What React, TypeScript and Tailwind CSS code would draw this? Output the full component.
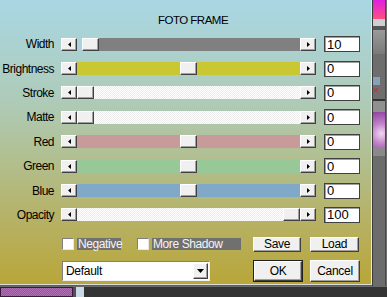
import React from "react";

const font = { fontFamily: '"Liberation Sans", Arial, sans-serif' };

type Row = { label: string; value: string; track: string; thumb: number; leftClear?: boolean };

// thumb: left offset inside the track area (px)
const rows: Row[] = [
  { label: "Width", value: "10", track: "bg-[#808080]", thumb: 5, leftClear: true },
  { label: "Brightness", value: "0", track: "bg-[#c9c832]", thumb: 103 },
  { label: "Stroke", value: "0", track: "dither", thumb: 0 },
  { label: "Matte", value: "0", track: "dither", thumb: 0 },
  { label: "Red", value: "0", track: "bg-[#c99a9a]", thumb: 103 },
  { label: "Green", value: "0", track: "bg-[#98c898]", thumb: 103 },
  { label: "Blue", value: "0", track: "bg-[#7fa8c9]", thumb: 103 },
  { label: "Opacity", value: "100", track: "dither", thumb: 206 },
];

const raised =
  "bg-[#f0f0f0] border border-t-[#ffffff] border-l-[#ffffff] border-r-[#404040] border-b-[#404040] shadow-[inset_-1px_-1px_0_#a0a0a0]";

function Arrow({ dir }: { dir: "left" | "right" | "down" }) {
  if (dir === "down")
    return (
      <svg width="7" height="4" viewBox="0 0 7 4">
        <path d="M0 0h7L3.5 4z" fill="#000" />
      </svg>
    );
  return (
    <svg width="3" height="5" viewBox="0 0 3 5">
      <path d={dir === "left" ? "M3 0v5L0 2.5z" : "M0 0v5l3-2.5z"} fill="#000" />
    </svg>
  );
}

function Slider({ r }: { r: Row }) {
  const dither =
    "bg-[#f6f6f6] bg-[repeating-conic-gradient(#ffffff_0_25%,#ececec_0_50%)] bg-[length:2px_2px]";
  const trackCls = r.track === "dither" ? dither : r.track;
  return (
    <div className="flex h-[13px] w-[255px]">
      <div className={`flex h-full w-[16px] items-center justify-center ${raised}`}>
        <Arrow dir="left" />
      </div>
      <div className={`relative flex-1 ${trackCls}`}>
        {r.leftClear && <div className="absolute inset-y-0 left-0 w-[5px] bg-[#a9d3dc]" />}
        <div
          className={`absolute top-0 h-full w-[17px] ${raised}`}
          style={{ left: r.thumb }}
        />
      </div>
      <div className={`flex h-full w-[16px] items-center justify-center ${raised}`}>
        <Arrow dir="right" />
      </div>
    </div>
  );
}

function Check({ label, w }: { label: string; w: string }) {
  return (
    <div className="flex items-center gap-[3px]">
      <div className="h-[12px] w-[12px] bg-white border border-t-[#808080] border-l-[#808080] border-r-[#e8e8e8] border-b-[#e8e8e8]" />
      <div className={`flex h-[12px] items-center bg-[#707070] px-[1px] text-[12px] leading-none tracking-[-0.4px] text-[#f4f4f4] ${w}`}>
        {label}
      </div>
    </div>
  );
}

function Btn({ label, def, w }: { label: string; def?: boolean; w: string }) {
  return (
    <div className={`${def ? "border border-[#202020] p-0" : ""} ${w}`}>
      <div
        className={`flex items-center justify-center text-[12px] tracking-[-0.3px] text-black ${raised} ${def ? "h-[20px]" : "h-[15px]"}`}
      >
        {label}
      </div>
    </div>
  );
}

export default function App() {
  return (
    <div className="flex h-[297px] w-[387px] flex-col overflow-hidden bg-[#5e5e5e]" style={font}>
      <div className="flex h-[286px]">
        {/* dialog */}
        <div className="flex h-[285px] w-[372px] flex-col border-r border-b border-r-[#e6e6e6] border-b-[#dcdcdc] bg-[linear-gradient(180deg,#a9d7e4_0%,#aecbb9_35%,#b2be8c_58%,#b6b164_78%,#b9a638_100%)]">
          <div className="pl-[15px] pt-[13px] text-center text-[11.5px] leading-[14px] tracking-[-0.5px] text-black">
            FOTO FRAME
          </div>
          <div className="mt-[5px] flex flex-col">
            {rows.map((r) => (
              <div key={r.label} className="flex h-[24.4px] items-center">
                <div className="w-[54px] text-right text-[12px] tracking-[-0.5px] text-black">{r.label}</div>
                <div className="ml-[7px]">
                  <Slider r={r} />
                </div>
                <div className="ml-[8px] flex h-[16px] w-[36px] items-center border border-[#404040] bg-white pl-[2px] text-[13px] leading-none text-black shadow-[inset_1px_1px_0_#a0a0a0]">
                  {r.value}
                </div>
              </div>
            ))}
          </div>
          <div className="mt-[9px] flex h-[16px] items-center pl-[62px]">
            <Check label="Negative" w="w-[44px]" />
            <div className="ml-[16px]">
              <Check label="More Shadow" w="w-[89px]" />
            </div>
            <div className="ml-[12px]">
              <Btn label="Save" w="w-[48px]" />
            </div>
            <div className="ml-[9px]">
              <Btn label="Load" w="w-[49px]" />
            </div>
          </div>
          <div className="mt-[8px] flex items-center pl-[62px]">
            <div className="flex h-[20px] w-[148px] items-center border border-t-[#808080] border-l-[#808080] border-r-[#f0f0f0] border-b-[#f0f0f0] bg-white">
              <div className="flex-1 pl-[3px] text-[12px] tracking-[-0.3px] text-black">Default</div>
              <div className={`mr-[1px] flex h-[16px] w-[15px] items-center justify-center ${raised}`}>
                <Arrow dir="down" />
              </div>
            </div>
            <div className="ml-[43px]">
              <Btn label="OK" def w="w-[50px]" />
            </div>
            <div className="ml-[7px]">
              <div className="flex h-[22px] w-[50px] items-center justify-center text-[12px] tracking-[-0.3px] text-black bg-[#f0f0f0] border border-t-[#ffffff] border-l-[#ffffff] border-r-[#404040] border-b-[#404040] shadow-[inset_-1px_-1px_0_#a0a0a0]">
                Cancel
              </div>
            </div>
          </div>
        </div>
        {/* side panel */}
        <div className="flex w-[15px] border-l border-l-[#3c3c3c]">
          <div className="flex w-[12px] flex-col">
            <div className="h-[19px] bg-[linear-gradient(180deg,#e020e0_0%,#ff5080_100%)]" />
            <div className="h-[7px] bg-[#cfcfcf]" />
            <div className="h-[4px] bg-[#555]" />
            <div className="h-[24px] bg-[linear-gradient(180deg,#9a9a9a,#7a7a7a)]" />
            <div className="relative h-[45px] bg-[#6e6e6e]">
              <div className="absolute left-0 top-[23px] h-[8px] w-[7px] bg-[#8aa0b8]" />
              <div className="absolute left-0 top-[31px] text-[11px] leading-none text-[#c03030]">×</div>
            </div>
            <div className="h-[2px] bg-[#333]" />
            <div className="h-[11px] bg-[#909090]" />
            <div className="h-[36px] bg-[radial-gradient(circle_at_70%_60%,#f0d8f0_0%,#c080c8_45%,#9040a0_100%)]" />
            <div className="h-[8px] bg-[#8a8a8a]" />
            <div className="flex-1 bg-[#6c6c6c]" />
          </div>
          <div className="w-[1px] bg-[#4a4a4a]" />
          <div className="flex-1 bg-[#707070]" />
        </div>
      </div>
      <div className="flex h-[11px] border-t border-t-[#6a6a6a]">
        <div className="w-[73px] border border-[#3a1a3a] bg-[#a05aa6] bg-[repeating-conic-gradient(#b070b4_0_25%,#9a52a0_0_50%)] bg-[length:2px_2px]" />
        <div className="w-[3px] bg-[#505050]" />
        <div className="w-[8px] bg-[#cad8e8]" />
        <div className="flex-1 bg-[#343434]" />
      </div>
    </div>
  );
}
